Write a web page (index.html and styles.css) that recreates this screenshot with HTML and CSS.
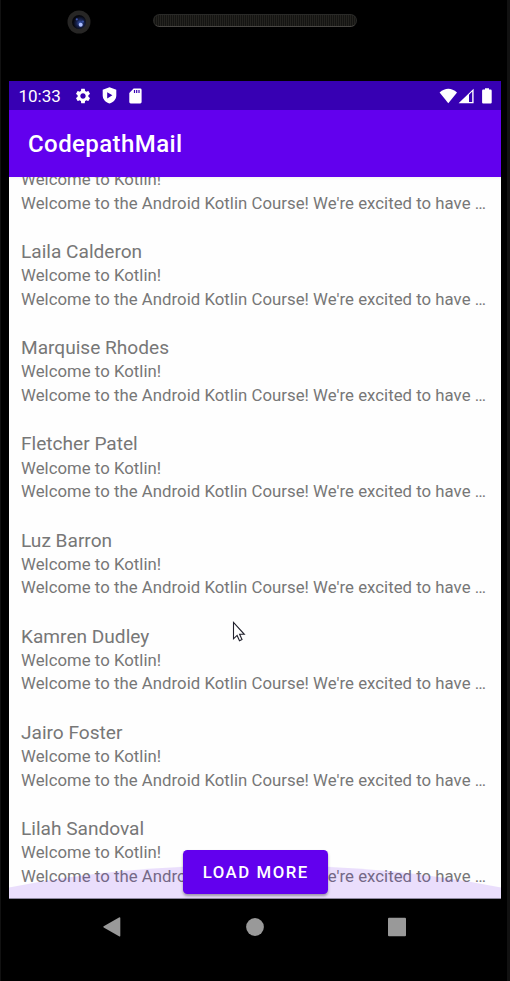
FILE: index.html
```html
<!DOCTYPE html>
<html lang="en">
<head>
<meta charset="utf-8">
<title>CodepathMail</title>
<link rel="stylesheet" href="styles.css">
</head>
<body>
<div class="phone">
  <div class="bezel">
    <svg class="camera" width="24" height="24" viewBox="0 0 24 24">
      <defs><radialGradient id="lens" cx="58%" cy="58%"><stop offset="0" stop-color="#3c5bb8"/><stop offset=".5" stop-color="#18234f"/><stop offset="1" stop-color="#06070d"/></radialGradient></defs>
      <circle cx="12" cy="12" r="11.5" fill="#272625"/>
      <circle cx="12" cy="12" r="7" fill="url(#lens)"/>
      <circle cx="13.7" cy="14.7" r="2" fill="#aebfff"/>
      <circle cx="9.8" cy="9.3" r="1.1" fill="#4058b0"/>
      <circle cx="15.8" cy="11.6" r="1.2" fill="#354f9f"/>
    </svg>
    <div class="speaker"></div>
  </div>
  <div class="screen">
    <div class="status">
      <span class="time">10:33</span>
      <svg class="gear" width="18" height="18" viewBox="0 0 24 24"><path fill="#fff" d="M19.14 12.94c.04-.3.06-.61.06-.94s-.02-.64-.07-.94l2.03-1.58c.18-.14.23-.41.12-.61l-1.92-3.32c-.12-.22-.37-.29-.59-.22l-2.39.96c-.5-.38-1.03-.7-1.62-.94L14.4 2.81c-.04-.24-.24-.41-.48-.41h-3.84c-.24 0-.43.17-.47.41l-.36 2.54c-.59.24-1.13.57-1.62.94l-2.39-.96c-.22-.08-.47 0-.59.22L2.74 8.87c-.12.21-.08.47.12.61l2.03 1.58c-.05.3-.09.63-.09.94s.02.64.07.94l-2.03 1.58c-.18.14-.23.41-.12.61l1.92 3.32c.12.22.37.29.59.22l2.39-.96c.5.38 1.03.7 1.62.94l.36 2.54c.05.24.24.41.48.41h3.84c.24 0 .44-.17.47-.41l.36-2.54c.59-.24 1.13-.56 1.62-.94l2.39.96c.22.08.47 0 .59-.22l1.92-3.32c.12-.22.07-.47-.12-.61l-2.01-1.58zM12 15.6c-1.98 0-3.6-1.62-3.6-3.6s1.62-3.6 3.6-3.6 3.6 1.62 3.6 3.6-1.62 3.6-3.6 3.6z"/></svg>
      <svg class="shield" width="15" height="17" viewBox="0 0 15 17"><path fill="#fff" fill-rule="evenodd" d="M7.5.3 14.3 2.8V8.5C14.3 12.2 11.5 15.4 7.5 16.6 3.5 15.4.7 12.2.7 8.5V2.8ZM5.2 5.2V11.4L10.4 8.3Z"/></svg>
      <svg class="sd" width="13" height="16" viewBox="0 0 13 16"><path fill="#fff" fill-rule="evenodd" d="M4.6.5H11.2Q12.6.5 12.6 1.9V14Q12.6 15.4 11.2 15.4H1.7Q.3 15.4.3 14V4.9ZM4.9 2V5H6.1V2ZM7.1 2V5H8.3V2ZM9.4 2V5H10.6V2Z"/></svg>
      <span class="spacer"></span>
      <svg class="wifi" width="19" height="16" viewBox="0 0 19 16"><path fill="#fff" d="M.6 4.5Q9.3-3 18 4.5L9.3 15.3Z"/></svg>
      <svg class="signal" width="16" height="16" viewBox="0 0 16 16"><path fill="#fff" fill-rule="evenodd" d="M15.6.7V15.3H.6ZM11 6.7V14.1H14.2V3.6Z"/></svg>
      <svg class="battery" width="10" height="16" viewBox="0 0 10 16"><path fill="#fff" d="M3 .2H7V1.6H8.6Q9.7 1.6 9.7 2.7V14.5Q9.7 15.6 8.6 15.6H1.2Q.1 15.6.1 14.5V2.7Q.1 1.6 1.2 1.6H3Z"/></svg>
    </div>
    <header class="appbar"><h1>CodepathMail</h1></header>
    <main class="content">
      <ul class="list">
        <li><h2>&nbsp;</h2><p>Welcome to Kotlin!</p><p>Welcome to the Android Kotlin Course! We're excited to have …</p></li>
        <li><h2>Laila Calderon</h2><p>Welcome to Kotlin!</p><p>Welcome to the Android Kotlin Course! We're excited to have …</p></li>
        <li><h2>Marquise Rhodes</h2><p>Welcome to Kotlin!</p><p>Welcome to the Android Kotlin Course! We're excited to have …</p></li>
        <li><h2>Fletcher Patel</h2><p>Welcome to Kotlin!</p><p>Welcome to the Android Kotlin Course! We're excited to have …</p></li>
        <li><h2>Luz Barron</h2><p>Welcome to Kotlin!</p><p>Welcome to the Android Kotlin Course! We're excited to have …</p></li>
        <li><h2>Kamren Dudley</h2><p>Welcome to Kotlin!</p><p>Welcome to the Android Kotlin Course! We're excited to have …</p></li>
        <li><h2>Jairo Foster</h2><p>Welcome to Kotlin!</p><p>Welcome to the Android Kotlin Course! We're excited to have …</p></li>
        <li><h2>Lilah Sandoval</h2><p>Welcome to Kotlin!</p><p>Welcome to the Android Kotlin Course! We're excited to have …</p></li>
      </ul>
      <svg class="glow" width="492" height="34" viewBox="0 0 492 34"><path fill="#6200ee" fill-opacity=".125" d="M0 23.5Q112 1 246 1T492 23.5V34H0Z"/></svg>
      <button class="more">LOAD MORE</button>
      <svg class="cursor" width="14" height="21" viewBox="0 0 14 21"><path fill="#fff" stroke="#20202c" stroke-width="1.1" d="M1.5 1.5V17.8L5.1 14.4 7.5 19.7 10 18.5 7.6 13.3H12.3Z"/></svg>
    </main>
    <nav class="nav">
      <svg width="18" height="20" viewBox="0 0 18 20"><path fill="#999" d="M.7 9.2 16 .5Q17.3 0 17.3 1V18.7Q17.3 19.8 16 19.2L.7 10.4Q-.1 9.8.7 9.2Z"/></svg>
      <svg width="18" height="20" viewBox="0 0 18 20"><circle cx="9" cy="10" r="8.9" fill="#999"/></svg>
      <svg width="18" height="20" viewBox="0 0 18 20"><rect y=".8" width="18" height="18.5" rx="1" fill="#999"/></svg>
    </nav>
  </div>
</div>
</body>
</html>
```

FILE: styles.css
```css
* { box-sizing: border-box; }
body, h1, h2, p, ul { margin: 0; padding: 0; }
body { background: #000; font-family: Roboto, "Liberation Sans", sans-serif; }
.phone {
  width: 510px;
  height: 981px;
  padding: 0 9px;
  overflow: hidden;
  background: linear-gradient(90deg, #111 0 1px, #000 1px 507px, #111 507px);
}
.bezel { display: flex; height: 81px; padding: 10px 0 0 58px; }
.speaker {
  width: 204px;
  height: 13px;
  margin: 4px 0 0 62px;
  border: 1px solid #2a2a28;
  border-bottom-color: #4a4845;
  border-radius: 7px;
  background: repeating-linear-gradient(90deg, #24231f 0 1px, #141412 1px 2px);
}
.screen { width: 492px; }
.status {
  display: flex;
  align-items: center;
  height: 29px;
  padding: 0 9px 0 9.5px;
  background: #3700b3;
  color: #fff;
}
.time { width: 55px; font-size: 17px; line-height: 29px; padding-top: 2px; }
.shield { margin-left: 10px; }
.sd { margin-left: 12px; }
.spacer { flex: 1; }
.battery { margin-left: 8px; }
.appbar {
  display: flex;
  align-items: center;
  height: 67px;
  padding-left: 19px;
  background: #6200ee;
  color: #fff;
}
.appbar h1 { font-size: 24px; font-weight: 500; line-height: 32px; letter-spacing: .42px; padding-top: 1px; }
.content {
  position: relative;
  height: 721.5px;
  overflow: hidden;
  background: linear-gradient(#f5f5f5, #fefefe 3px);
  border-bottom: 1px solid #8f89a0;
}
.list { list-style: none; margin-top: -34.1px; padding-left: 12px; color: #777; }
.list li { height: 96.17px; }
.list h2 { font-size: 19.1px; font-weight: 400; line-height: 25.2px; }
.list p { font-size: 16.76px; line-height: 23.5px; letter-spacing: .03px; white-space: nowrap; }
.glow { position: absolute; left: 0; bottom: 0; }
.more {
  position: absolute;
  left: 173.5px;
  top: 673px;
  width: 145.5px;
  height: 43.5px;
  padding: 0 0 0 1px;
  border: 0;
  border-radius: 4.5px;
  background: #6200ee;
  color: #fff;
  font: 500 16.76px/20px Roboto, "Liberation Sans", sans-serif;
  letter-spacing: 1.55px;
  box-shadow: 0 2px 3px rgba(0, 0, 0, .35);
}
.cursor { position: absolute; left: 223px; top: 444px; }
.nav {
  display: flex;
  justify-content: space-between;
  padding: 18px 95px 0 94px;
}
```
